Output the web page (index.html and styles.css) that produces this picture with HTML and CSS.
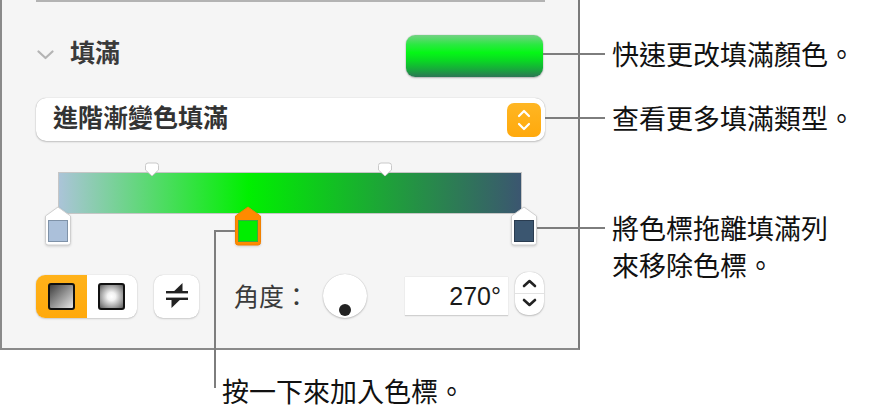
FILE: index.html
```html
<!DOCTYPE html>
<html lang="zh-Hant">
<head>
<meta charset="utf-8">
<link rel="stylesheet" href="styles.css">
</head>
<body>
<div class="page">
  <div class="top">
    <section class="panel">
      <div class="sep"></div>
      <div class="header">
        <svg class="chev" width="17" height="10" viewBox="0 0 17 10"><path d="M1.5 1.5 L8.5 8 L15.5 1.5" fill="none" stroke="#b4b4b4" stroke-width="2.2" stroke-linecap="round" stroke-linejoin="round"/></svg>
        <span class="title">填滿</span>
        <div class="well"></div>
      </div>
      <div class="dropdown">
        <span class="dd-text">進階漸變色填滿</span>
        <span class="dd-btn">
          <svg width="16" height="24" viewBox="0 0 16 24"><path d="M3 8 L8 3 L13 8 M3 16 L8 21 L13 16" fill="none" stroke="#fff" stroke-width="2.2" stroke-linecap="round" stroke-linejoin="round"/></svg>
        </span>
      </div>
      <div class="editor">
        <div class="bar"></div>
        <svg class="mid m1" width="16" height="15" viewBox="0 0 16 15"><path d="M1.5 3.5 Q1.5 1 4 1 H12 Q14.5 1 14.5 3.5 V8 L8 14 L1.5 8 Z" fill="#fff" stroke="#c9c9c9" stroke-width="1"/></svg>
        <svg class="mid m2" width="16" height="15" viewBox="0 0 16 15"><path d="M1.5 3.5 Q1.5 1 4 1 H12 Q14.5 1 14.5 3.5 V8 L8 14 L1.5 8 Z" fill="#fff" stroke="#c9c9c9" stroke-width="1"/></svg>
        <svg class="stop s1" width="28" height="40" viewBox="0 0 28 40"><path d="M14 1 L26.5 10 V36.5 Q26.5 39 24 39 H4 Q1.5 39 1.5 36.5 V10 Z" fill="#fff" stroke="#cfcfcf" stroke-width="1"/><rect x="4.5" y="14.5" width="19" height="21" fill="#abc0da" stroke="#7f92a8" stroke-width="1"/></svg>
        <svg class="stop s2" width="28" height="40" viewBox="0 0 28 40"><path d="M14 1 L26.5 10 V36.5 Q26.5 39 24 39 H4 Q1.5 39 1.5 36.5 V10 Z" fill="#ff8a00" stroke="#f08000" stroke-width="1"/><rect x="4.5" y="14.5" width="19" height="21" fill="#00ee00" stroke="#3fa63f" stroke-width="1"/></svg>
        <svg class="stop s3" width="28" height="40" viewBox="0 0 28 40"><path d="M14 1 L26.5 10 V36.5 Q26.5 39 24 39 H4 Q1.5 39 1.5 36.5 V10 Z" fill="#fff" stroke="#cfcfcf" stroke-width="1"/><rect x="4.5" y="14.5" width="19" height="21" fill="#3b5670" stroke="#2a3c50" stroke-width="1"/></svg>
      </div>
      <div class="controls">
        <div class="seg">
          <span class="seg-item on"><span class="sq lin"></span></span>
          <span class="seg-item"><span class="sq rad"></span></span>
        </div>
        <span class="swap">
          <svg width="24" height="26" viewBox="0 0 24 26"><rect x="1" y="8" width="22" height="2.4" fill="#222"/><path d="M9 8.2 L17.5 8.2 L17.5 0 Z" fill="#222"/><rect x="1" y="14.6" width="22" height="2.4" fill="#222"/><path d="M6.5 16.8 L15 16.8 L6.5 25 Z" fill="#222"/></svg>
        </span>
        <span class="angle-label">角度：</span>
        <span class="dial"><span class="dot"></span></span>
        <span class="field">270°</span>
        <span class="stepper">
          <svg width="29" height="43" viewBox="0 0 29 43"><path d="M9 14 L14.5 9 L20 14" fill="none" stroke="#222" stroke-width="2.6" stroke-linecap="round" stroke-linejoin="round"/><line x1="0" y1="21.5" x2="29" y2="21.5" stroke="#e2e2e2" stroke-width="1"/><path d="M9 28 L14.5 33 L20 28" fill="none" stroke="#222" stroke-width="2.6" stroke-linecap="round" stroke-linejoin="round"/></svg>
        </span>
      </div>
    </section>
    <aside class="notes">
      <p class="note n1">快速更改填滿顏色。</p>
      <p class="note n2">查看更多填滿類型。</p>
      <p class="note n3">將色標拖離填滿列<br>來移除色標。</p>
    </aside>
  </div>
  <p class="note-bottom">按一下來加入色標。</p>
</div>
</body>
</html>
```
FILE: styles.css
```css
* { box-sizing: border-box; }
html, body { margin: 0; padding: 0; background: #fff; }
body {
  width: 884px;
  height: 414px;
  overflow: hidden;
  font-family: "Noto Sans CJK TC", "Noto Sans", sans-serif;
}
.page { display: flex; flex-direction: column; }
.top { display: flex; align-items: flex-start; }

.panel {
  width: 580px;
  height: 350px;
  background: #f5f5f5;
  border-left: 2px solid #8a8a8a;
  border-right: 2px solid #7a7a7a;
  border-bottom: 2px solid #8a8a8a;
  padding: 0 33px 0 34px;
  display: flex;
  flex-direction: column;
}
.sep { height: 2px; background: #b3b3b3; }

.header {
  margin-top: 33px;
  height: 42px;
  display: flex;
  align-items: center;
}
.chev { margin: 0 0 2px 1px; }
.title {
  margin-left: 16px;
  margin-bottom: 10px;
  font-size: 25px;
  font-weight: 700;
  color: #3a3a3a;
  line-height: 1;
}
.well {
  margin-left: auto;
  margin-right: 2px;
  width: 137px;
  height: 42px;
  border-radius: 9px;
  background: linear-gradient(#74d184 0%, #2ce843 22%, #05f716 42%, #0ad624 62%, #18a83c 82%, #2c7554 100%);
  box-shadow: 0 0 1px rgba(0,0,0,.35), 0 1px 2px rgba(0,0,0,.25);
}

.dropdown {
  margin-top: 21px;
  height: 43px;
  background: #fff;
  border-radius: 10px;
  box-shadow: 0 0 1px rgba(0,0,0,.3), 0 1px 2px rgba(0,0,0,.2);
  display: flex;
  align-items: center;
  padding: 0 4px 0 17px;
}
.dd-text {
  margin-bottom: 6px;
  font-size: 25px;
  font-weight: 700;
  color: #333;
  line-height: 1;
}
.dd-btn {
  margin-left: auto;
  width: 34px;
  height: 34px;
  border-radius: 7px;
  background: linear-gradient(#ffb623, #ffa90c);
  display: flex;
  align-items: center;
  justify-content: center;
}

.editor {
  position: relative;
  margin-top: 21px;
  height: 83px;
  padding-top: 10px;
}
.bar {
  margin-left: 22px;
  width: 464px;
  height: 42px;
  border: 1px solid #c6c6c6;
  background: linear-gradient(90deg, #abc4d8 0%, #00f000 41%, #3b5670 100%);
}
.mid { position: absolute; top: 0; }
.m1 { left: 108px; }
.m2 { left: 341px; }
.stop { position: absolute; top: 44px; filter: drop-shadow(0 1px 1px rgba(0,0,0,.15)); }
.s1 { left: 8px; }
.s2 { left: 198px; }
.s3 { left: 474px; }

.controls {
  margin-top: 28px;
  height: 46px;
  display: flex;
  align-items: center;
}
.seg {
  width: 101px;
  height: 43px;
  border-radius: 9px;
  overflow: hidden;
  display: flex;
  background: #fff;
  box-shadow: 0 0 1px rgba(0,0,0,.25), 0 1px 2px rgba(0,0,0,.15);
}
.seg-item {
  flex: 1;
  display: flex;
  align-items: center;
  justify-content: center;
}
.seg-item.on { background: linear-gradient(#ffb21a, #ffa90c); }
.sq {
  width: 27px;
  height: 27px;
  border: 2.5px solid #111;
  border-radius: 3px;
}
.sq.lin { background: linear-gradient(135deg, #3e3e3e 0%, #8a8a8a 45%, #e6e6e6 100%); }
.sq.rad { background: radial-gradient(circle at 50% 50%, #fff 0%, #f2f2f2 25%, #9a9a9a 70%, #5a5a5a 100%); }

.swap {
  margin-left: 17px;
  width: 45px;
  height: 43px;
  border-radius: 9px;
  background: #fff;
  box-shadow: 0 0 1px rgba(0,0,0,.25), 0 1px 2px rgba(0,0,0,.15);
  display: flex;
  align-items: center;
  justify-content: center;
}
.angle-label {
  margin-left: 35px;
  margin-bottom: 2px;
  font-size: 25px;
  color: #3a3a3a;
  line-height: 1;
}
.dial {
  position: relative;
  margin-left: 14px;
  width: 44px;
  height: 44px;
  border-radius: 50%;
  background: #fff;
  box-shadow: 0 0 1px rgba(0,0,0,.25), 0 1px 2px rgba(0,0,0,.2);
}
.dot {
  position: absolute;
  left: 16px;
  top: 30px;
  width: 12px;
  height: 12px;
  border-radius: 50%;
  background: #222;
}
.field {
  margin-left: 38px;
  width: 103px;
  height: 39px;
  background: #fff;
  border-bottom: 1px solid #d0d0d0;
  box-shadow: 0 0 1px rgba(0,0,0,.2);
  font-family: "Liberation Sans", Arial, sans-serif;
  font-size: 25px;
  color: #1a1a1a;
  text-align: right;
  padding-right: 7px;
  line-height: 39px;
}
.stepper {
  margin-left: 7px;
  margin-top: -6px;
  width: 29px;
  height: 43px;
  border-radius: 13px;
  background: #fff;
  box-shadow: 0 0 1px rgba(0,0,0,.3), 0 1px 2px rgba(0,0,0,.2);
  display: flex;
}

.notes {
  padding-left: 32px;
  padding-top: 35px;
}
.note {
  position: relative;
  margin: 0;
  font-size: 27px;
  line-height: 37px;
  color: #111;
  white-space: nowrap;
}
.note::before {
  content: "";
  position: absolute;
  top: 18px;
  height: 2px;
  background: #7d7d7d;
}
.n1::before { left: -69px; width: 62px; }
.n2 { margin-top: 27px; }
.n2::before { left: -67px; width: 60px; }
.n3 { margin-top: 73px; }
.n3::before { left: -75px; width: 68px; }

.note-bottom {
  position: relative;
  margin: 22px 0 0 222px;
  font-size: 27px;
  line-height: 37px;
  color: #111;
}
.note-bottom::before {
  content: "";
  position: absolute;
  left: -8px;
  top: -142px;
  width: 19px;
  height: 156px;
  border-left: 2px solid #7d7d7d;
  border-top: 2px solid #7d7d7d;
}
```
